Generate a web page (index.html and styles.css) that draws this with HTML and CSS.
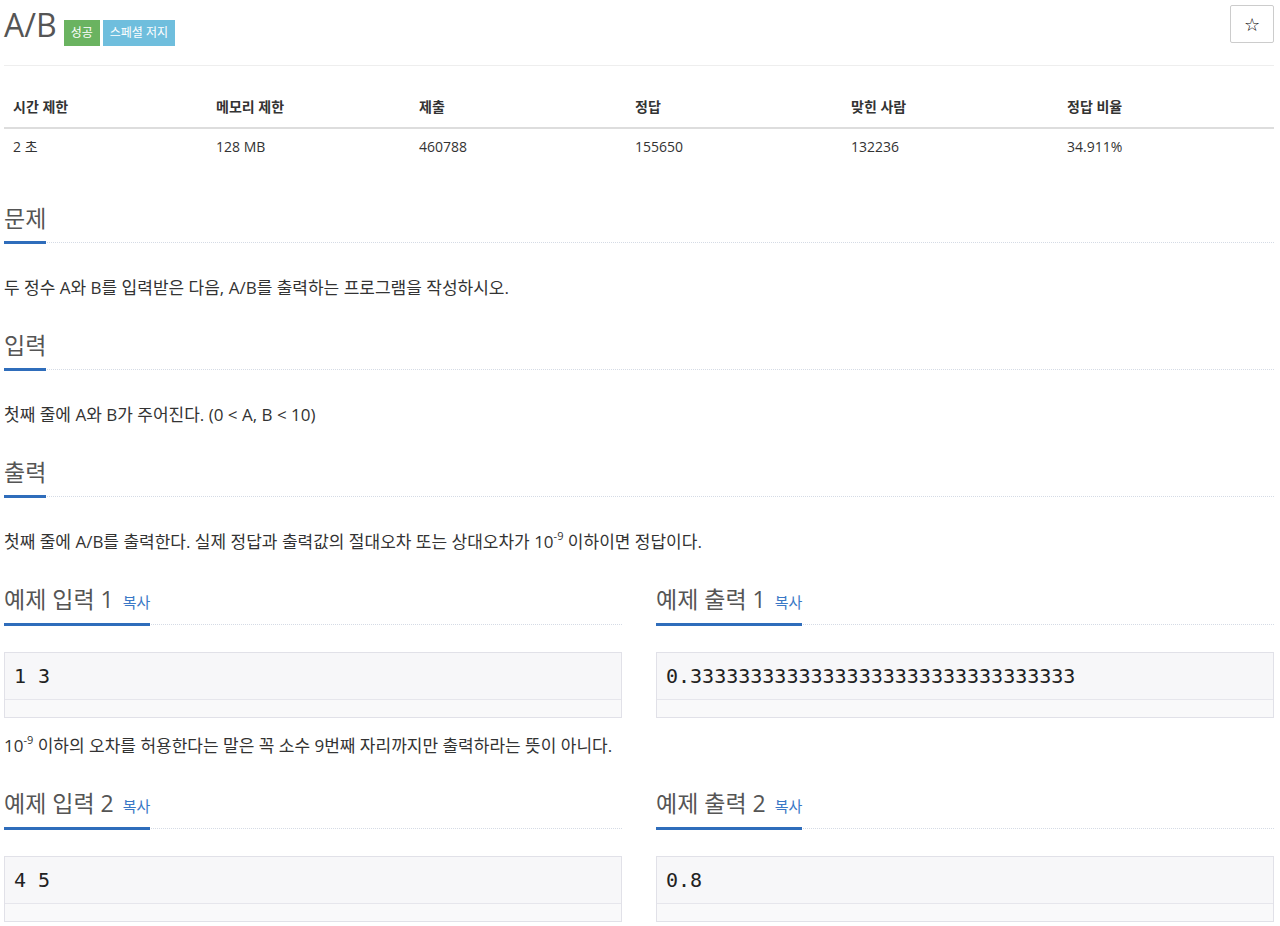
FILE: index.html
```html
<!DOCTYPE html>
<html lang="ko">
<head>
<meta charset="utf-8">
<title>A/B</title>
<link rel="stylesheet" href="styles.css">
</head>
<body>
<div class="page">
  <div class="title-row">
    <h1 class="title">A/B<span class="label label-success">성공</span><span class="label label-info">스페셜 저지</span></h1>
    <button class="star" type="button">☆</button>
  </div>
  <hr class="divider">

  <table class="info">
    <thead>
      <tr>
        <th class="c-narrow">시간 제한</th>
        <th class="c-narrow">메모리 제한</th>
        <th class="c-wide">제출</th>
        <th class="c-wide">정답</th>
        <th class="c-wide">맞힌 사람</th>
        <th class="c-wide">정답 비율</th>
      </tr>
    </thead>
    <tbody>
      <tr>
        <td>2 초</td>
        <td>128 MB</td>
        <td>460788</td>
        <td>155650</td>
        <td>132236</td>
        <td>34.911%</td>
      </tr>
    </tbody>
  </table>

  <section class="section section-first">
    <div class="headline"><h2>문제</h2></div>
    <p class="text">두 정수 A와 B를 입력받은 다음, A/B를 출력하는 프로그램을 작성하시오.</p>
  </section>

  <section class="section">
    <div class="headline"><h2>입력</h2></div>
    <p class="text">첫째 줄에 A와 B가 주어진다. (0 &lt; A, B &lt; 10)</p>
  </section>

  <section class="section">
    <div class="headline"><h2>출력</h2></div>
    <p class="text">첫째 줄에 A/B를 출력한다. 실제 정답과 출력값의 절대오차 또는 상대오차가 10<sup>-9</sup> 이하이면 정답이다.</p>
  </section>

  <div class="samples section">
    <section class="sample">
      <div class="headline"><h2>예제 입력 1 <span class="copy">복사</span></h2></div>
      <div class="sample-box"><pre class="sample-data">1 3</pre><div class="sample-scroll"></div></div>
    </section>
    <section class="sample">
      <div class="headline"><h2>예제 출력 1 <span class="copy">복사</span></h2></div>
      <div class="sample-box"><pre class="sample-data">0.33333333333333333333333333333333</pre><div class="sample-scroll"></div></div>
    </section>
  </div>
  <p class="text note">10<sup>-9</sup> 이하의 오차를 허용한다는 말은 꼭 소수 9번째 자리까지만 출력하라는 뜻이 아니다.</p>

  <div class="samples section">
    <section class="sample">
      <div class="headline"><h2>예제 입력 2 <span class="copy">복사</span></h2></div>
      <div class="sample-box"><pre class="sample-data">4 5</pre><div class="sample-scroll"></div></div>
    </section>
    <section class="sample">
      <div class="headline"><h2>예제 출력 2 <span class="copy">복사</span></h2></div>
      <div class="sample-box"><pre class="sample-data">0.8</pre><div class="sample-scroll"></div></div>
    </section>
  </div>
</div>
</body>
</html>
```

FILE: styles.css
```css
html, body {
  margin: 0;
  padding: 0;
  background: #fff;
}

body {
  font-family: "Open Sans", "Noto Sans CJK KR", sans-serif;
  font-size: 14px;
  color: #333;
}

.page {
  width: 1270px;
  margin-left: 4px;
}

/* title */
.title-row {
  display: flex;
  justify-content: space-between;
  align-items: flex-start;
  padding-top: 5px;
}

.title {
  margin: 0;
  font-size: 32px;
  font-weight: 400;
  line-height: 40px;
  color: #555;
}

.label {
  display: inline-block;
  margin-left: 7px;
  padding: 5px 7px 6px;
  font-size: 12px;
  line-height: 15px;
  font-weight: 400;
  color: #fff;
  vertical-align: baseline;
}

.label + .label {
  margin-left: 3px;
}

.label-success {
  background: #6ab360;
}

.label-info {
  background: #6fbedd;
}

.star {
  width: 44px;
  height: 38px;
  margin: 0;
  padding: 0;
  background: #fff;
  border: 1px solid #ccc;
  border-radius: 2px;
  font-family: "DejaVu Sans", sans-serif;
  font-size: 18px;
  color: #000;
  cursor: pointer;
}

.divider {
  margin: 19px 0 21px;
  border: 0;
  border-top: 1px solid #eee;
}

/* info table */
.info {
  width: 100%;
  border-collapse: collapse;
  margin: 0;
}

.info th,
.info td {
  padding: 10px 9px;
  line-height: 20px;
  text-align: left;
  font-size: 14px;
}

.info th {
  font-weight: 700;
  border-bottom: 2px solid #ddd;
  color: #333;
}

.info td {
  padding-top: 8px;
}

.c-narrow {
  width: 185px;
}

.c-wide {
  width: 198px;
}

/* sections */
.section {
  margin-top: 30px;
}

.section-first {
  margin-top: 36px;
}

.headline {
  border-bottom: 1px dotted #d5dbe5;
  margin-bottom: 33px;
}

.headline h2 {
  display: inline-block;
  margin: 0 0 -2px;
  padding-bottom: 8px;
  font-size: 23px;
  line-height: 30px;
  font-weight: 400;
  color: #555;
  border-bottom: 3px solid #2f6dbb;
}

.copy {
  margin-left: 3px;
  font-size: 15px;
  line-height: 1;
  color: #3a78c6;
}

.text {
  margin: 0;
  font-size: 17px;
  line-height: 24px;
  color: #333;
}

sup {
  position: relative;
  top: -8px;
  font-size: 11px;
  line-height: 1;
  vertical-align: baseline;
}

/* samples */
.samples {
  display: grid;
  grid-template-columns: 1fr 1fr;
  column-gap: 34px;
}

.sample .headline {
  margin-bottom: 27px;
}

.sample .headline h2 {
  padding-bottom: 9px;
}

.sample-box {
  border: 1px solid #e1e1e8;
  background: #f7f7f9;
}

.sample-data {
  margin: 0;
  padding: 9px;
  font-family: "DejaVu Sans Mono", monospace;
  font-size: 20px;
  line-height: 28px;
  color: #222;
  border-bottom: 1px solid #e6e6ec;
}

.sample-scroll {
  height: 17px;
  background: #f9f9fa;
}

.note {
  margin-top: 16px;
}
```
